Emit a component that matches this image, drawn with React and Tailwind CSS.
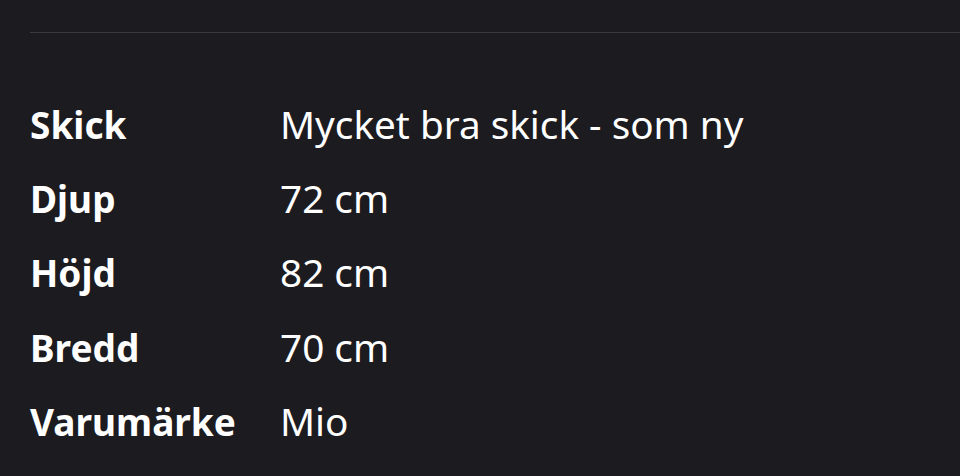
const rows = [
  ['Skick', 'Mycket bra skick - som ny'],
  ['Djup', '72 cm'],
  ['Höjd', '82 cm'],
  ['Bredd', '70 cm'],
  ['Varumärke', 'Mio'],
];

export default function App() {
  return (
    <div className="h-[476px] w-[960px] overflow-hidden bg-[#1c1b20] pl-[30px] text-white" style={{ fontFamily: '"Noto Sans", sans-serif' }}>
      <div className="pt-[32px]">
        <div className="h-px bg-[#3a3940]" />
      </div>
      <div className="pt-[54px]">
        {rows.map(([label, value]) => (
          <div key={label} className="flex h-[74.3px] items-center leading-none">
            <div className="w-[250px] text-[37px] font-bold">{label}</div>
            <div className="text-[38.7px]">{value}</div>
          </div>
        ))}
      </div>
    </div>
  );
}
